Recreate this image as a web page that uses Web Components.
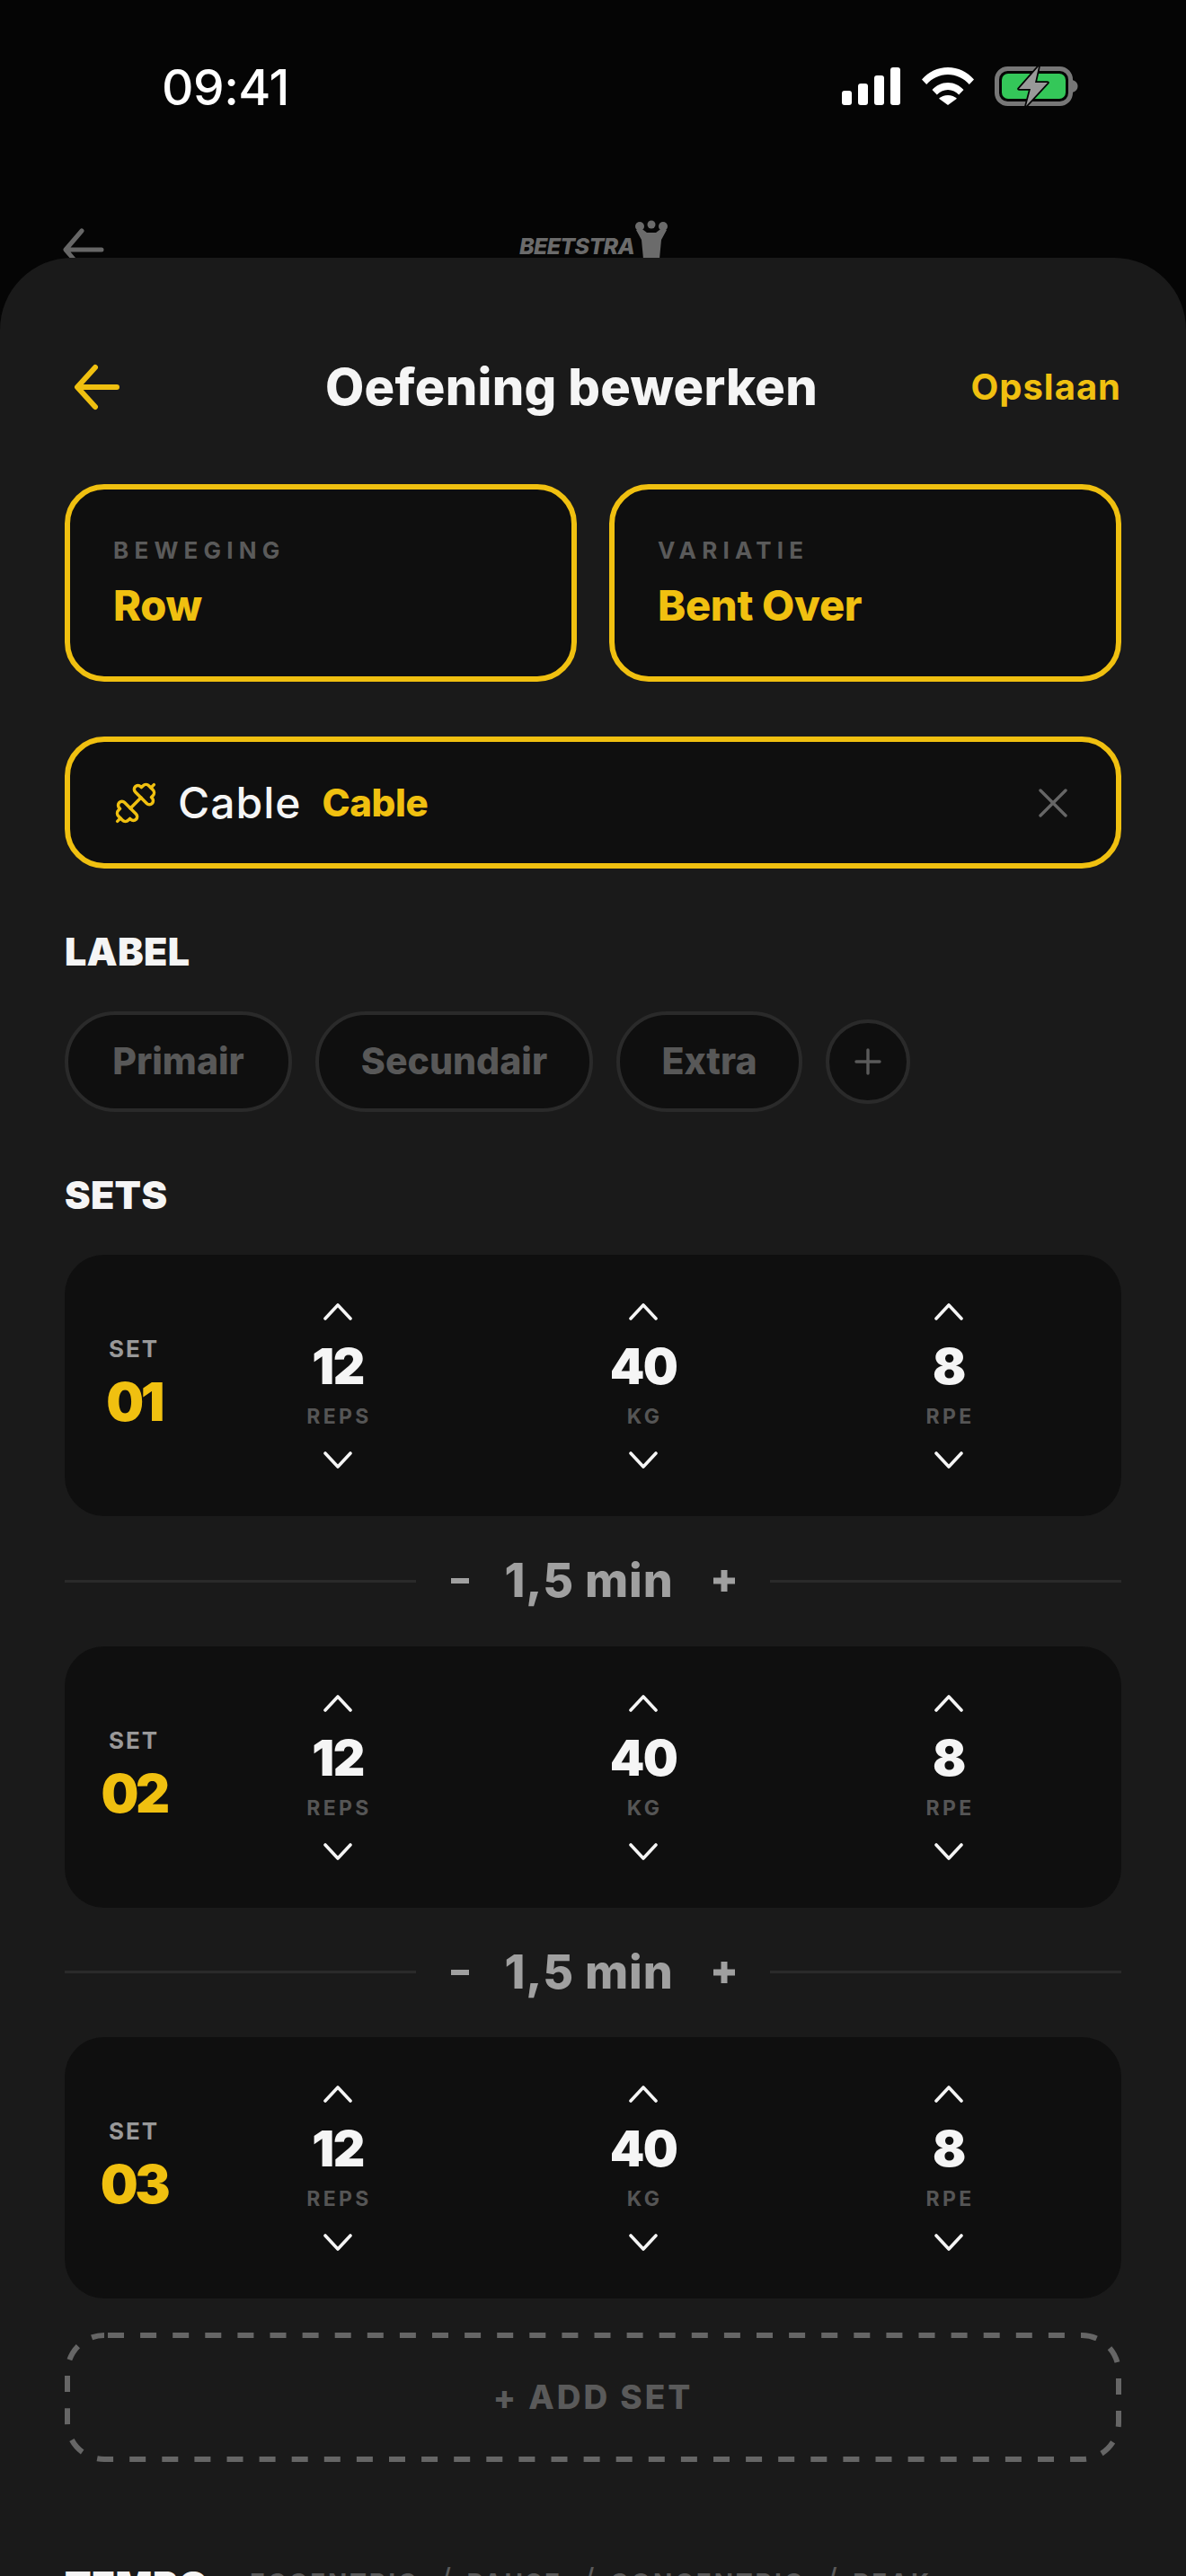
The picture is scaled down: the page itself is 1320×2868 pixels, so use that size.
<!DOCTYPE html>
<html lang="nl">
<head>
<meta charset="utf-8">
<title>Oefening bewerken</title>
<style>
  html, body { margin: 0; padding: 0; background: #050505; }
  body { width: 1320px; height: 2868px; overflow: hidden; font-family: "Inter", "Liberation Sans", sans-serif; }
</style>
</head>
<body>
<app-screen>
  <status-bar slot="status"></status-bar>
  <behind-bar slot="behind"></behind-bar>
  <edit-sheet slot="sheet">
    <sheet-header></sheet-header>
    <div style="display:grid;grid-template-columns:570px 570px;gap:36px;margin-top:81px">
      <pick-card label="BEWEGING" value="Row"></pick-card>
      <pick-card label="VARIATIE" value="Bent Over"></pick-card>
    </div>
    <gear-field style="margin-top:61px"></gear-field>
    <section-title style="margin-top:67px">LABEL</section-title>
    <chip-row style="margin-top:42px">
      <label-chip style="width:253px">Primair</label-chip>
      <label-chip style="width:309px">Secundair</label-chip>
      <label-chip style="width:207px">Extra</label-chip>
    </chip-row>
    <section-title style="margin-top:67px">SETS</section-title>
    <set-card num="01" style="margin-top:42px"></set-card>
    <rest-row></rest-row>
    <set-card num="02"></set-card>
    <rest-row></rest-row>
    <set-card num="03"></set-card>
    <add-set style="margin-top:38px"></add-set>
    <tempo-title style="margin-top:112px"></tempo-title>
  </edit-sheet>
</app-screen>

<script>
const YELLOW = '#f0c010'

class AppScreen extends HTMLElement {
  constructor () {
    super()
    this.attachShadow({ mode: 'open' }).innerHTML = `
      <style>
        :host { display: block; width: 1320px; height: 2868px; overflow: hidden; background: #050505; }
      </style>
      <slot name="status"></slot>
      <slot name="behind"></slot>
      <slot name="sheet"></slot>`
  }
}

class StatusBar extends HTMLElement {
  constructor () {
    super()
    this.attachShadow({ mode: 'open' }).innerHTML = `
      <style>
        :host { display: flex; box-sizing: border-box; height: 196px; padding: 70px 120px 0 180px; justify-content: space-between; align-items: flex-start; color: #fff; }
        .time { font: 500 55px/54px "Inter", sans-serif; letter-spacing: -0.5px; }
        .icons { display: flex; gap: 23px; align-items: center; padding-top: 4px; }
      </style>
      <span class="time">09:41</span>
      <div class="icons">
        <svg width="66" height="42" viewBox="0 0 66 42" fill="#fff">
          <rect x="0" y="26" width="11" height="16" rx="3"/>
          <rect x="18" y="18" width="11" height="24" rx="3"/>
          <rect x="36" y="9" width="11" height="33" rx="3"/>
          <rect x="54" y="0" width="11" height="42" rx="3"/>
        </svg>
        <svg width="58" height="42" viewBox="0 0 58 42" fill="#fff">
          <path d="M0 13.500C7.500 5 17.500 0 29 0s21.500 5 29 13.500l-5.200 5.600C46.500 12 38.300 8 29 8S11.500 12 5.200 19.100Z"/>
          <path d="M11.500 25C16 20 22 17 29 17s13 3 17.500 8l-5.300 5.600C38 27.200 33.800 25 29 25s-9 2.200-12.200 5.600Z"/>
          <path d="M19 34.800C21.500 32.300 25 31 29 31s7.500 1.300 10 3.800L29 42Z"/>
        </svg>
        <svg width="93" height="44" viewBox="0 0 93 44">
          <rect x="2.500" y="2.500" width="82" height="39" rx="12" fill="none" stroke="#777" stroke-width="5"/>
          <rect x="8" y="8" width="71" height="28" rx="7" fill="#34c759"/>
          <path d="M86.500 15c3.500 1 6 3.500 6 7s-2.500 6-6 7Z" fill="#777"/>
          <path d="M49 0 27 25h13l-5 19 24-26H45Z" fill="#999" stroke="#050505" stroke-width="3.500" stroke-linejoin="round" paint-order="stroke"/>
        </svg>
      </div>`
  }
}

class BehindBar extends HTMLElement {
  constructor () {
    super()
    this.attachShadow({ mode: 'open' }).innerHTML = `
      <style>
        :host { display: block; position: relative; height: 91px; overflow: hidden; }
        .arrow { position: absolute; left: 70px; top: 57px; }
        .logo { position: absolute; left: 578px; top: 48px; display: flex; align-items: flex-start; }
        .word { font: italic 800 25px/34px "Inter", sans-serif; color: #6b6b6b; letter-spacing: -0.7px; margin-top: 13px; }
      </style>
      <svg class="arrow" width="46" height="50" viewBox="0 0 46 50" fill="none" stroke="#666" stroke-width="5" stroke-linecap="round" stroke-linejoin="round"><path d="M43 25H4M21 4 3 25l18 21"/></svg>
      <div class="logo">
        <span class="word">BEETSTRA</span>
        <svg width="38" height="44" viewBox="0 0 38 44" fill="#6b6b6b">
          <circle cx="6" cy="8" r="5"/><circle cx="19" cy="6" r="4.500"/><circle cx="32" cy="8" r="5"/>
          <path d="M2 12h8l4 3h10l4-3h8l-6 11-2 21H10L8 23Z"/>
        </svg>
      </div>`
  }
}

class EditSheet extends HTMLElement {
  constructor () {
    super()
    this.attachShadow({ mode: 'open' }).innerHTML = `
      <style>
        :host { display: block; box-sizing: border-box; height: 2581px; padding: 117px 72px 0; background: #1a1a1a; border-radius: 80px 80px 0 0; }
      </style>
      <slot></slot>`
  }
}

class SheetHeader extends HTMLElement {
  constructor () {
    super()
    this.attachShadow({ mode: 'open' }).innerHTML = `
      <style>
        :host { display: grid; grid-template-columns: 1fr auto; align-items: center; position: relative; height: 54px; }
        svg { margin-left: 10px; }
        h1 { position: absolute; left: 290px; top: 0; margin: 0; font: 800 56px/54px "Inter", sans-serif; letter-spacing: 0.3px; color: #f5f5f5; white-space: nowrap; }
        .save { font: 700 40px/54px "Inter", sans-serif; color: ${YELLOW}; letter-spacing: 1px; }
      </style>
      <svg width="52" height="52" viewBox="0 0 52 52" fill="none" stroke="${YELLOW}" stroke-width="6" stroke-linecap="round" stroke-linejoin="round"><path d="M48 26H5M24 4 4 26l20 22"/></svg>
      <h1>Oefening bewerken</h1>
      <span class="save">Opslaan</span>`
  }
}

class PickCard extends HTMLElement {
  constructor () {
    super()
    this.attachShadow({ mode: 'open' }).innerHTML = `
      <style>
        :host { display: block; box-sizing: border-box; height: 220px; padding: 50px 48px 0; background: #0f0f0f; border: 6px solid ${YELLOW}; border-radius: 44px; }
        .l { font: 700 26px/36px "Inter", sans-serif; letter-spacing: 6.200px; color: #5a5a5a; }
        .v { font: 800 47px/54px "Inter", sans-serif; letter-spacing: -0.3px; color: ${YELLOW}; margin-top: 16px; }
      </style>
      <div class="l">${this.getAttribute('label')}</div>
      <div class="v">${this.getAttribute('value')}</div>`
  }
}

class GearField extends HTMLElement {
  constructor () {
    super()
    this.attachShadow({ mode: 'open' }).innerHTML = `
      <style>
        :host { display: flex; align-items: center; box-sizing: border-box; height: 147px; padding: 0 54px 0 50px; background: #0f0f0f; border: 6px solid ${YELLOW}; border-radius: 44px; }
        .name { font: 500 48px/54px "Inter", sans-serif; letter-spacing: 1px; color: #f5f5f5; margin-left: 24px; }
        .tag { font: 800 42px/54px "Inter", sans-serif; color: ${YELLOW}; margin-left: 23px; letter-spacing: -0.4px; }
        .x { margin-left: auto; }
      </style>
      <svg width="46" height="46" viewBox="0 0 46 46" fill="none" stroke="${YELLOW}" stroke-width="2.900" stroke-linejoin="round" stroke-linecap="round">
        <g transform="rotate(-45 23 23) translate(23 23) scale(1.200) translate(-23 -23)">
          <path d="M16 23H30"/>
          <path d="M30 15.500a3.500 3.500 0 0 1 7 0v1h2a4 4 0 0 1 4 4v5a4 4 0 0 1-4 4h-2v1a3.500 3.500 0 0 1-7 0Z"/>
          <path d="M43 23h4"/>
          <g transform="rotate(180 23 23)">
            <path d="M30 15.500a3.500 3.500 0 0 1 7 0v1h2a4 4 0 0 1 4 4v5a4 4 0 0 1-4 4h-2v1a3.500 3.500 0 0 1-7 0Z"/>
            <path d="M43 23h4"/>
          </g>
        </g>
      </svg>
      <span class="name">Cable</span>
      <span class="tag">Cable</span>
      <svg class="x" width="32" height="32" viewBox="0 0 32 32" fill="none" stroke="#666" stroke-width="3.400" stroke-linecap="round"><path d="M2 2 30 30M30 2 2 30"/></svg>`
  }
}

class SectionTitle extends HTMLElement {
  constructor () {
    super()
    this.attachShadow({ mode: 'open' }).innerHTML = `
      <style>
        :host { display: block; font: 900 43px/50px "Inter", sans-serif; letter-spacing: 0.3px; color: #f5f5f5; }
      </style>
      <slot></slot>`
  }
}

class ChipRow extends HTMLElement {
  constructor () {
    super()
    this.attachShadow({ mode: 'open' }).innerHTML = `
      <style>
        :host { display: flex; align-items: center; gap: 26px; }
        .add { box-sizing: border-box; width: 94px; height: 94px; border-radius: 50%; border: 4px solid #2a2a2a; background: #0f0f0f; display: flex; align-items: center; justify-content: center; }
      </style>
      <slot></slot>
      <div class="add"><svg width="30" height="30" viewBox="0 0 30 30" fill="none" stroke="#5a5a5a" stroke-width="3.400" stroke-linecap="round"><path d="M15 2V28M2 15H28"/></svg></div>`
  }
}

class LabelChip extends HTMLElement {
  constructor () {
    super()
    this.attachShadow({ mode: 'open' }).innerHTML = `
      <style>
        :host { display: block; box-sizing: border-box; height: 112px; text-align: center; border: 4px solid #2a2a2a; border-radius: 56px; background: #0f0f0f; font: 800 41px/102px "Inter", sans-serif; color: #585858; }
      </style>
      <slot></slot>`
  }
}

class StepCol extends HTMLElement {
  constructor () {
    super()
    this.attachShadow({ mode: 'open' }).innerHTML = `
      <style>
        :host { display: flex; flex-direction: column; align-items: center; }
        .up { margin-top: 53px; display: block; }
        .n { font: 900 55px/56px "Inter", sans-serif; letter-spacing: -1.500px; color: #f5f5f5; margin-top: 23px; height: 56px; }
        .u { font: 700 23px/28px "Inter", sans-serif; letter-spacing: 3.400px; color: #555; margin-top: 14px; margin-right: -3px; height: 28px; }
        .down { margin-top: 25px; display: block; }
      </style>
      <svg class="up" width="34" height="20" viewBox="0 0 34 20" fill="none" stroke="#f5f5f5" stroke-width="3.600" stroke-linecap="round" stroke-linejoin="round"><path d="M3 18 17 3l14 15"/></svg>
      <div class="n">${this.getAttribute('n')}</div>
      <div class="u">${this.getAttribute('u')}</div>
      <svg class="down" width="34" height="20" viewBox="0 0 34 20" fill="none" stroke="#f5f5f5" stroke-width="3.600" stroke-linecap="round" stroke-linejoin="round"><path d="M3 2l14 15L31 2"/></svg>`
  }
}

class SetCard extends HTMLElement {
  constructor () {
    super()
    this.attachShadow({ mode: 'open' }).innerHTML = `
      <style>
        :host { display: grid; grid-template-columns: 134px 340px 340px 340px; box-sizing: border-box; height: 291px; background: #0f0f0f; border-radius: 44px; }
        .set { width: 154px; padding-top: 89px; text-align: center; }
        .s { font: 700 26px/32px "Inter", sans-serif; letter-spacing: 2px; color: #999; }
        .num { font: 900 59px/64px "Inter", sans-serif; letter-spacing: -3.500px; color: ${YELLOW}; margin-top: 11px; }
      </style>
      <div class="set">
        <div class="s">SET</div>
        <div class="num">${this.getAttribute('num')}</div>
      </div>
      <step-col n="12" u="REPS"></step-col>
      <step-col n="40" u="KG"></step-col>
      <step-col n="8" u="RPE"></step-col>`
  }
}

class RestRow extends HTMLElement {
  constructor () {
    super()
    this.attachShadow({ mode: 'open' }).innerHTML = `
      <style>
        :host { display: flex; align-items: center; height: 144.500px; color: #a0a0a0; }
        .line { flex: 1; height: 3px; background: #2a2a2a; }
        .m { width: 20px; height: 6px; background: #a0a0a0; margin-left: 39px; }
        .t { font: 800 52px/60px "Inter", sans-serif; letter-spacing: 0.8px; margin: 0 45px 0 40px; white-space: nowrap; }
        svg { margin-right: 39px; }
      </style>
      <div class="line"></div>
      <div class="m"></div>
      <span class="t">1,5 min</span>
      <svg width="24" height="24" viewBox="0 0 24 24" fill="none" stroke="#a0a0a0" stroke-width="7"><path d="M12 0V24M0 12H24"/></svg>
      <div class="line"></div>`
  }
}

class AddSet extends HTMLElement {
  constructor () {
    super()
    this.attachShadow({ mode: 'open' }).innerHTML = `
      <style>
        :host { display: flex; position: relative; align-items: center; justify-content: center; box-sizing: border-box; height: 144px; font: 800 37px/50px "Inter", sans-serif; letter-spacing: 3px; color: #5a5a5a; }
        svg { position: absolute; left: 0; top: 0; }
      </style>
      <svg width="1176" height="144" fill="none"><rect x="3" y="3" width="1170" height="138" rx="41" stroke="#666" stroke-width="6" stroke-dasharray="18 18.100" stroke-dashoffset="-4"/></svg>
      + ADD SET`
  }
}

class TempoTitle extends HTMLElement {
  constructor () {
    super()
    this.attachShadow({ mode: 'open' }).innerHTML = `
      <style>
        :host { display: flex; align-items: center; white-space: nowrap; }
        .t { font: 900 43px/50px "Inter", sans-serif; letter-spacing: 0.3px; color: #f5f5f5; width: 206px; }
        .d { font: 700 28px/50px "Inter", sans-serif; letter-spacing: 2.900px; color: #5a5a5a; display: flex; align-items: center; margin-top: -4px; }
        .sl { font-size: 46px; font-weight: 300; margin: 0 14px 0 20px; }
      </style>
      <span class="t">TEMPO</span>
      <span class="d">ECCENTRIC<span class="sl">/</span>PAUSE<span class="sl">/</span>CONCENTRIC<span class="sl">/</span>PEAK</span>`
  }
}

customElements.define('app-screen', AppScreen)
customElements.define('status-bar', StatusBar)
customElements.define('behind-bar', BehindBar)
customElements.define('edit-sheet', EditSheet)
customElements.define('sheet-header', SheetHeader)
customElements.define('pick-card', PickCard)
customElements.define('gear-field', GearField)
customElements.define('section-title', SectionTitle)
customElements.define('chip-row', ChipRow)
customElements.define('label-chip', LabelChip)
customElements.define('step-col', StepCol)
customElements.define('set-card', SetCard)
customElements.define('rest-row', RestRow)
customElements.define('add-set', AddSet)
customElements.define('tempo-title', TempoTitle)
</script>
</body>
</html>
